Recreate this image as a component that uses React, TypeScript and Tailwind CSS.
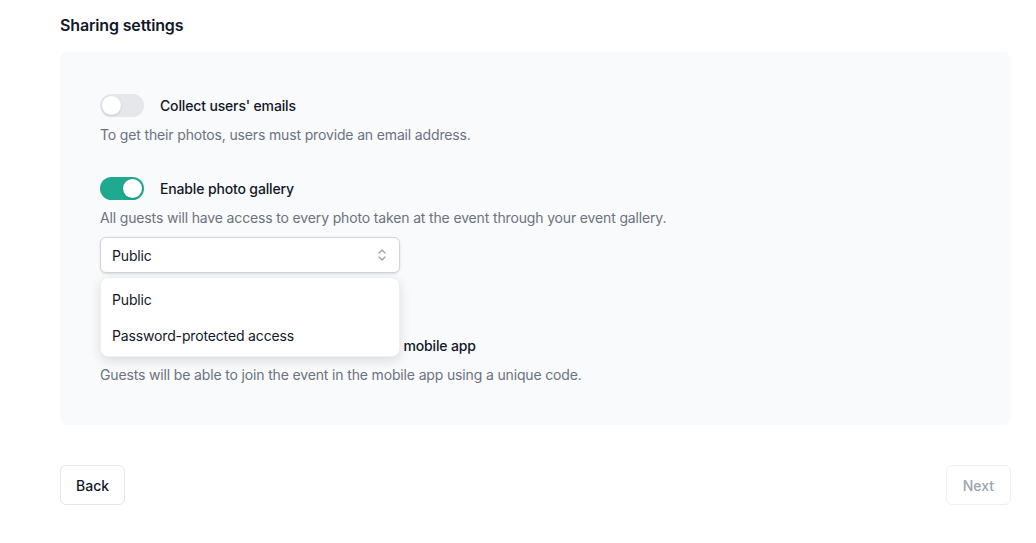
import React from "react";

function Toggle({ on }: { on: boolean }) {
  return (
    <div
      className={`relative w-[44px] h-[23px] rounded-full shrink-0 ${on ? "bg-[#1fa98f]" : "bg-[#e5e7eb]"}`}
    >
      <div
        className={`absolute top-[2px] w-[19px] h-[19px] rounded-full bg-white shadow-sm ${on ? "left-[23px]" : "left-[2px]"}`}
      />
    </div>
  );
}

function Row({ on, label, desc, children }: { on: boolean; label: string; desc: string; children?: React.ReactNode }) {
  return (
    <div className="flex flex-col">
      <div className="flex items-center gap-4 h-[23px]">
        <Toggle on={on} />
        <span className="text-[14px] font-medium text-[#111827] tracking-[-0.15px]">{label}</span>
      </div>
      <p className="mt-[8px] text-[14px] leading-[20px] text-[#6b7280] tracking-[-0.15px]">{desc}</p>
      {children}
    </div>
  );
}

export default function App() {
  return (
    <div className="w-[1036px] h-[543px] bg-white overflow-hidden" style={{ fontFamily: "Inter, 'Noto Sans', sans-serif" }}>
      <div className="ml-[60px] w-[951px]">
        <h2 className="pt-[14px] text-[16px] leading-[22px] font-semibold text-[#111827] tracking-[-0.15px]">Sharing settings</h2>
        <div className="mt-[16px] rounded-lg bg-[#f9fafb] px-[40px] pt-[42px] pb-[40px] flex flex-col">
          <Row on={false} label="Collect users' emails" desc="To get their photos, users must provide an email address." />
          <div className="mt-[32px]">
            <Row
              on={true}
              label="Enable photo gallery"
              desc="All guests will have access to every photo taken at the event through your event gallery."
            >
              <div className="relative mt-[9px] w-[300px]">
                <div className="h-[36px] rounded-md border border-[#d1d5db] bg-white flex items-center justify-between pl-[11px] pr-[11px] shadow-sm">
                  <span className="text-[14px] text-[#111827] tracking-[-0.15px]">Public</span>
                  <svg width="12" height="16" viewBox="0 0 12 16" fill="none" stroke="#9ca3af" strokeWidth="1.4" strokeLinecap="round" strokeLinejoin="round">
                    <path d="M3 6l3-3 3 3" />
                    <path d="M3 10l3 3 3-3" />
                  </svg>
                </div>
                <div className="absolute left-0 top-[40px] w-[300px] rounded-lg bg-white shadow-[0_4px_12px_rgba(0,0,0,0.12)] border border-[#f0f0f0] py-[3px] z-10">
                  <div className="h-[36px] flex items-center px-[11px] text-[14px] text-[#111827] tracking-[-0.15px]">Public</div>
                  <div className="h-[36px] flex items-center px-[11px] text-[14px] text-[#111827] tracking-[-0.15px]">Password-protected access</div>
                </div>
              </div>
            </Row>
          </div>
          <div className="mt-[61px]">
            <Row
              on={false}
              label="Allow guests to join your event in the mobile app"
              desc="Guests will be able to join the event in the mobile app using a unique code."
            />
          </div>
        </div>
        <div className="mt-[40px] flex justify-between">
          <button className="h-[40px] px-[15px] rounded-md border border-[#e5e7eb] bg-white text-[14px] font-medium text-[#111827]">Back</button>
          <button className="h-[40px] px-[16px] rounded-md border border-[#f0f0f0] bg-white text-[14px] font-medium text-[#9ca3af]">Next</button>
        </div>
      </div>
    </div>
  );
}
